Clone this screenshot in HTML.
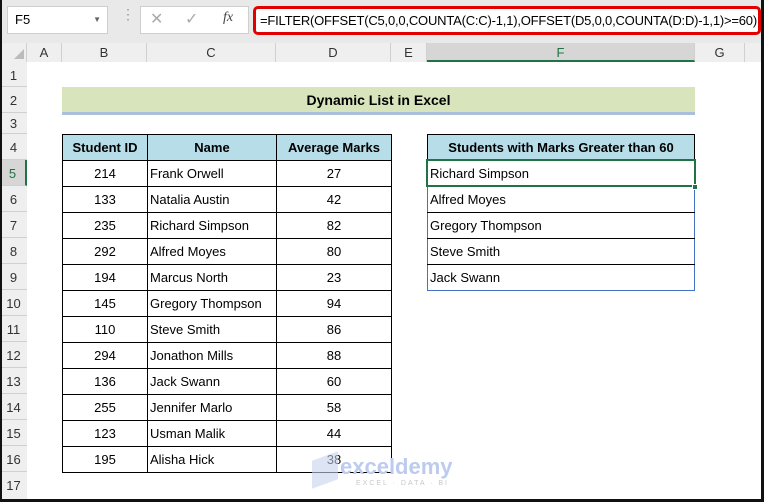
<!DOCTYPE html><html><head><style>
*{margin:0;padding:0;box-sizing:border-box}
body{width:764px;height:502px;background:#e6e6e6;position:relative;overflow:hidden;font-family:"Liberation Sans",Arial,sans-serif;font-size:13px;color:#000}
.a{position:absolute}
.ch{position:absolute;top:43px;height:19px;background:#efefef;border-right:1px solid #d0d0d0;text-align:center;line-height:19px;font-size:13px;color:#333}
.rh{position:absolute;left:0;width:27px;background:#efefef;border-bottom:1px solid #d0d0d0;text-align:center;font-size:13px;color:#333;padding-top:6px}
.c{position:absolute;height:27px;border:1px solid #000;line-height:25px;white-space:nowrap;overflow:hidden}
</style></head><body>
<div class="a" style="left:0;top:0;width:764px;height:43px;background:#e9e9e9"></div>
<div class="a" style="left:7px;top:6px;width:101px;height:28px;background:#fff;border:1px solid #cfcfcf;line-height:26px;padding-left:7px;font-size:13px">F5<span style="position:absolute;right:6px;top:0;font-size:8px;color:#666">▼</span></div>
<div class="a" style="left:121px;top:12px;color:#999;font-size:14px;line-height:5px">⋮</div>
<div class="a" style="left:140px;top:6px;width:109px;height:28px;background:#fff;border:1px solid #cfcfcf"></div>
<div class="a" style="left:150px;top:9px;color:#aaa;font-size:16px">✕</div>
<div class="a" style="left:185px;top:9px;color:#aaa;font-size:16px">✓</div>
<div class="a" style="left:223px;top:10px;color:#444;font-size:14px;font-style:italic;font-family:'Liberation Serif',serif">fx</div>
<div class="a" style="left:253px;top:6px;width:508px;height:29px;background:#fff;border:3px solid #e30000;border-radius:5px;line-height:23px;padding-left:4px;font-size:13px;white-space:nowrap;overflow:hidden;letter-spacing:-0.2px">=FILTER(OFFSET(C5,0,0,COUNTA(C:C)-1,1),OFFSET(D5,0,0,COUNTA(D:D)-1,1)&gt;=60)</div>
<div class="a" style="left:27px;top:62px;width:735px;height:438px;background:#fff"></div>
<div class="ch" style="left:0;width:27px;background:#efefef"></div>
<div class="a" style="left:14px;top:49px;width:0;height:0;border-left:10px solid transparent;border-bottom:10px solid #bbb"></div>
<div class="ch" style="left:27px;width:35px">A</div>
<div class="ch" style="left:62px;width:85px">B</div>
<div class="ch" style="left:147px;width:129px">C</div>
<div class="ch" style="left:276px;width:115px">D</div>
<div class="ch" style="left:391px;width:36px">E</div>
<div class="ch" style="left:427px;width:268px;background:#d6d6d6;border-bottom:2px solid #217346;color:#217346">F</div>
<div class="ch" style="left:695px;width:50px">G</div>
<div class="ch" style="left:745px;width:17px"></div>
<div class="rh" style="top:62px;height:25px">1</div>
<div class="rh" style="top:87px;height:26px">2</div>
<div class="rh" style="top:113px;height:21px;padding-top:3px">3</div>
<div class="rh" style="top:134px;height:26px">4</div>
<div class="rh" style="top:160px;height:26px;background:#d6d6d6;border-right:2px solid #217346;color:#217346">5</div>
<div class="rh" style="top:186px;height:26px">6</div>
<div class="rh" style="top:212px;height:26px">7</div>
<div class="rh" style="top:238px;height:26px">8</div>
<div class="rh" style="top:264px;height:26px">9</div>
<div class="rh" style="top:290px;height:26px">10</div>
<div class="rh" style="top:316px;height:26px">11</div>
<div class="rh" style="top:342px;height:26px">12</div>
<div class="rh" style="top:368px;height:26px">13</div>
<div class="rh" style="top:394px;height:26px">14</div>
<div class="rh" style="top:420px;height:26px">15</div>
<div class="rh" style="top:446px;height:26px">16</div>
<div class="rh" style="top:472px;height:28px">17</div>
<div class="a" style="left:62px;top:87px;width:633px;height:25px;background:#d8e4bc;text-align:center;font-weight:bold;font-size:14px;line-height:26px">Dynamic List in Excel</div>
<div class="a" style="left:62px;top:112px;width:633px;height:3px;background:#a9bfdc"></div>
<div id="t"></div>
<div class="c" style="left:427px;top:134px;width:268px;background:#b7dde8;font-weight:bold;text-align:center">Students with Marks Greater than 60</div>
<div class="a" style="left:427px;top:160px;width:268px;height:131px;border:1px solid #4472c4"></div>
<div class="a" style="left:427px;top:212px;width:268px;height:1px;background:#000"></div>
<div class="a" style="left:427px;top:238px;width:268px;height:1px;background:#000"></div>
<div class="a" style="left:427px;top:264px;width:268px;height:1px;background:#000"></div>
<div class="a" style="left:430px;top:160px;line-height:27px">Richard Simpson</div>
<div class="a" style="left:430px;top:186px;line-height:27px">Alfred Moyes</div>
<div class="a" style="left:430px;top:212px;line-height:27px">Gregory Thompson</div>
<div class="a" style="left:430px;top:238px;line-height:27px">Steve Smith</div>
<div class="a" style="left:430px;top:264px;line-height:27px">Jack Swann</div>
<div class="a" style="left:426px;top:159px;width:270px;height:28px;border:2px solid #217346"></div>
<div class="a" style="left:692px;top:184px;width:6px;height:6px;background:#217346;border:1px solid #fff"></div>
<div class="a" style="left:312px;top:456px;width:26px;height:28px;background:#c6d3ef;opacity:.6;transform:skewY(-20deg)"></div>
<div class="a" style="left:340px;top:454px;font-size:22px;font-weight:bold;color:#bccbee;line-height:26px">exceldemy</div>
<div class="a" style="left:356px;top:480px;font-size:7px;color:#c8c8c8;letter-spacing:2px">EXCEL · DATA · BI</div>
<div class="a" style="left:0;top:0;width:2px;height:502px;background:#111"></div>
<div class="a" style="left:761px;top:0;width:3px;height:502px;background:#111"></div>
<div class="a" style="left:0;top:499px;width:764px;height:3px;background:#111"></div>
<script>
var d=[["214","Frank Orwell","27"],["133","Natalia Austin","42"],["235","Richard Simpson","82"],["292","Alfred Moyes","80"],["194","Marcus North","23"],["145","Gregory Thompson","94"],["110","Steve Smith","86"],["294","Jonathon Mills","88"],["136","Jack Swann","60"],["255","Jennifer Marlo","58"],["123","Usman Malik","44"],["195","Alisha Hick","38"]];
var h='<div class="c" style="left:62px;top:134px;width:86px;background:#b7dde8;font-weight:bold;text-align:center">Student ID</div><div class="c" style="left:147px;top:134px;width:130px;background:#b7dde8;font-weight:bold;text-align:center">Name</div><div class="c" style="left:276px;top:134px;width:116px;background:#b7dde8;font-weight:bold;text-align:center">Average Marks</div>';
d.forEach(function(r,i){var y=160+i*26;h+='<div class="c" style="left:62px;top:'+y+'px;width:86px;text-align:center">'+r[0]+'</div><div class="c" style="left:147px;top:'+y+'px;width:130px;padding-left:2px">'+r[1]+'</div><div class="c" style="left:276px;top:'+y+'px;width:116px;text-align:center">'+r[2]+'</div>';});
document.getElementById('t').innerHTML=h;
</script>
</body></html>
